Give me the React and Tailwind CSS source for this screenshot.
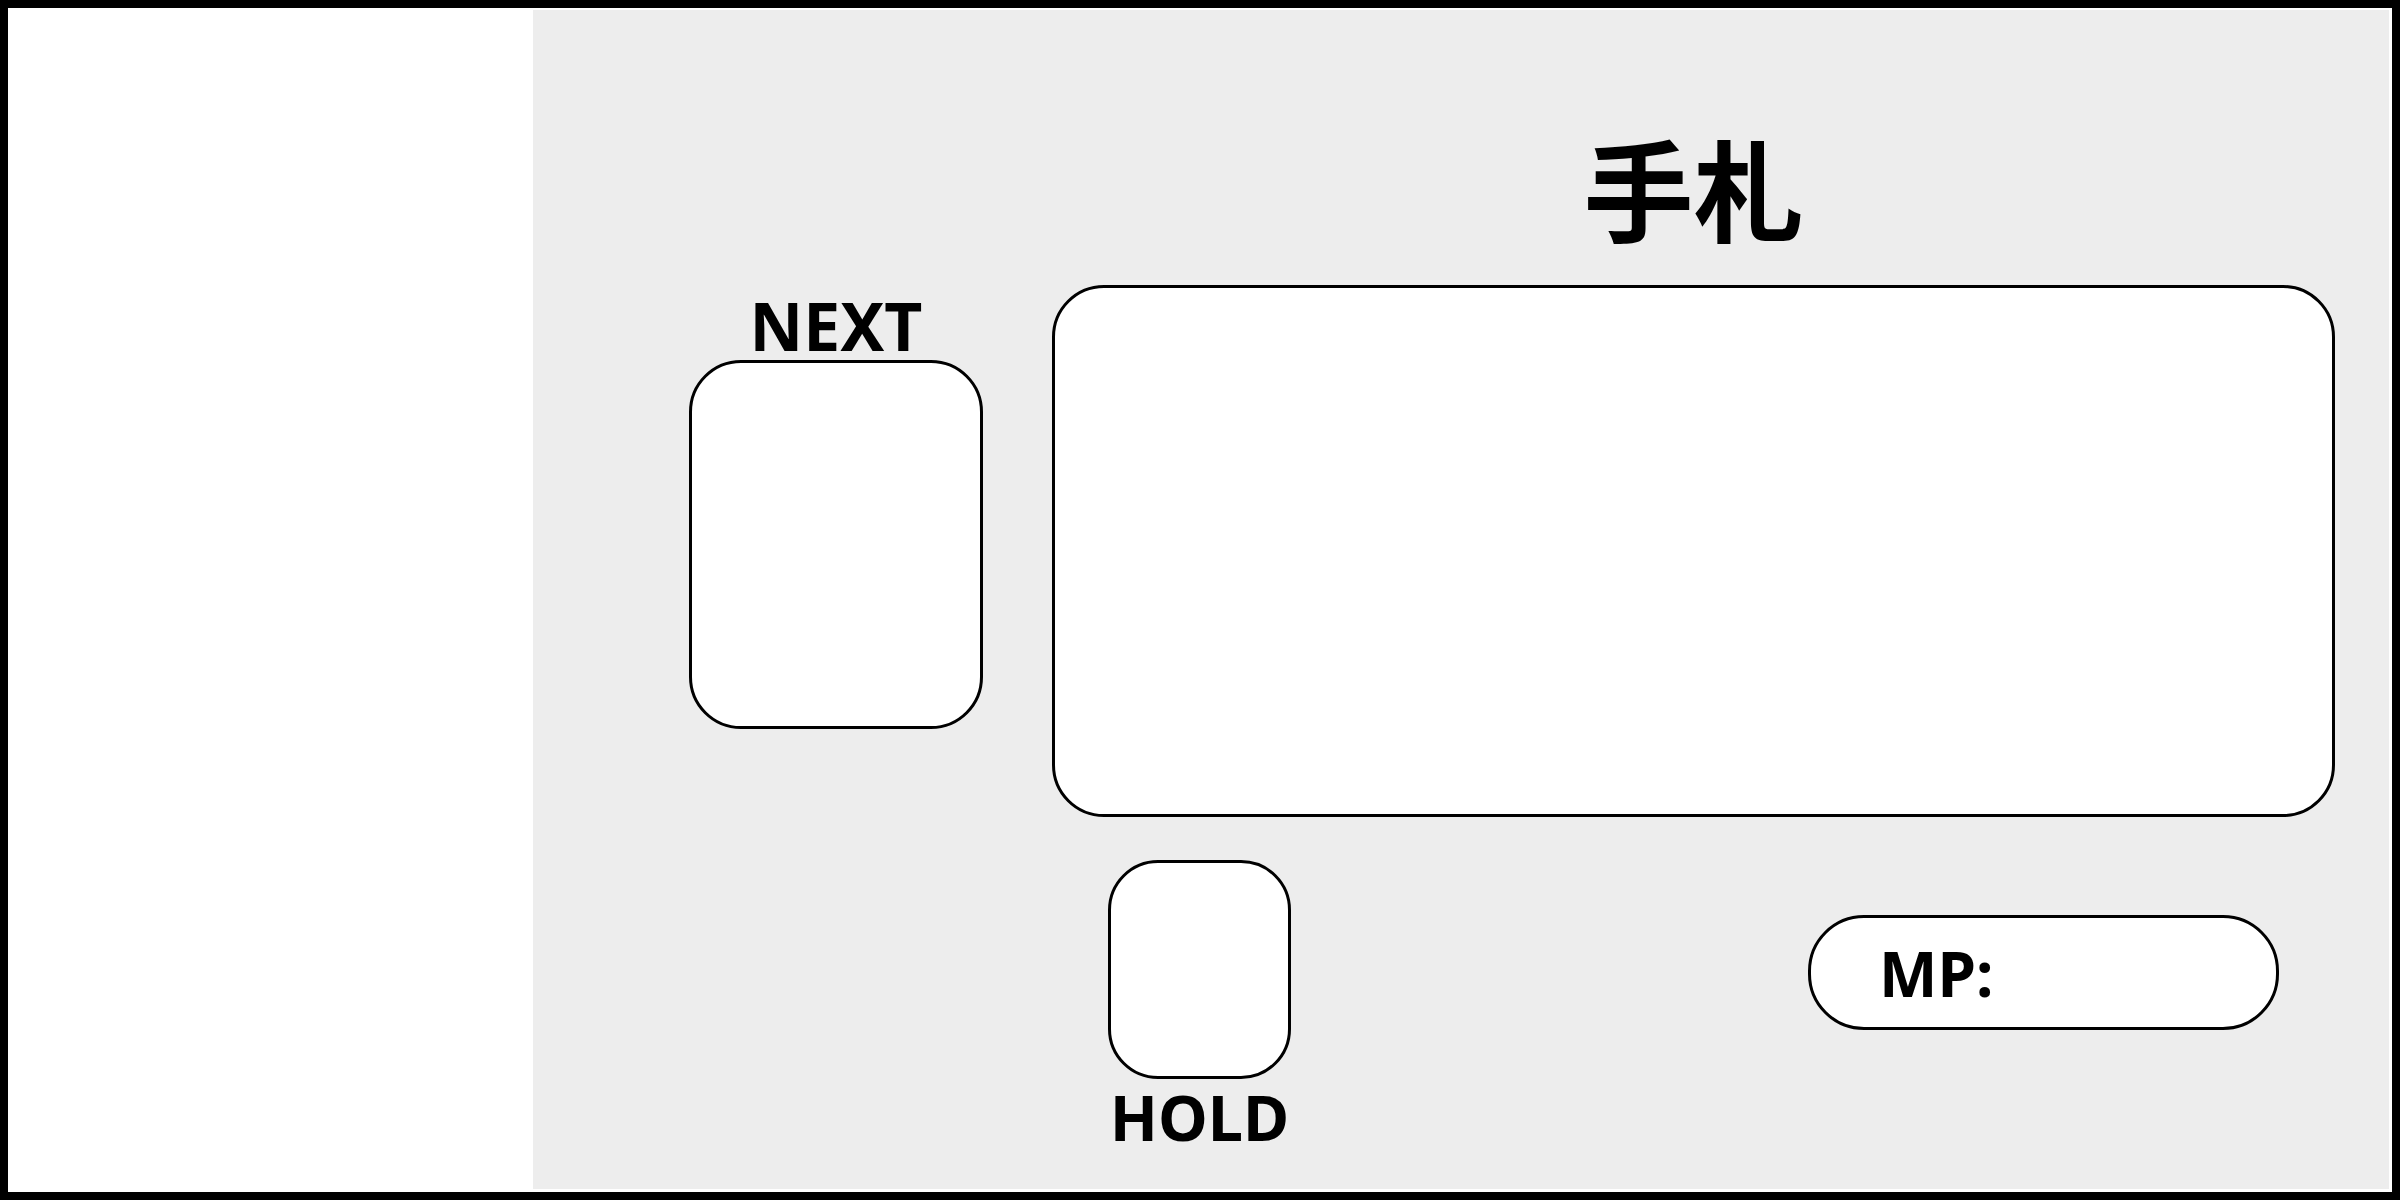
export default function App() {
  const label = { fontFamily: '"Noto Sans", "Noto Sans CJK JP", sans-serif' };
  const title = { fontFamily: '"Noto Sans CJK JP", "Noto Sans", sans-serif' };

  return (
    <div className="h-screen w-full border-[8px] border-black bg-white pt-[2px] pr-[3px] pb-[3px] flex">
      <aside className="w-[525px] bg-white" />

      <main className="flex-1 bg-[#ededed] flex flex-col">
        <div className="flex items-start pl-[156px]">
          <div className="w-[294px] mt-[282px] flex flex-col">
            <div className="text-[66px] leading-none font-bold text-black text-center" style={label}>
              NEXT
            </div>
            <div className="mt-[2px] h-[369px] rounded-[52px] border-[3px] border-black bg-white" />
          </div>

          <div className="ml-[69px] w-[1283px] flex flex-col">
            <h1 className="mt-[121px] text-[110px] leading-none font-bold text-black text-center" style={title}>
              手札
            </h1>
            <div className="mt-[44px] h-[532px] rounded-[52px] border-[3px] border-black bg-white" />
          </div>
        </div>

        <div className="flex items-start pl-[575px]">
          <div className="w-[183px] mt-[43px] flex flex-col">
            <div className="h-[219px] rounded-[50px] border-[3px] border-black bg-white" />
            <div className="mt-[6px] text-[63px] leading-none font-bold text-black text-center" style={label}>
              HOLD
            </div>
          </div>

          <div className="ml-[517px] mt-[98px] w-[471px] h-[115px] rounded-[56px] border-[3px] border-black bg-white flex items-center pl-[68px]">
            <span className="text-[62px] leading-none font-bold text-black" style={label}>
              MP:
            </span>
          </div>
        </div>
      </main>
    </div>
  );
}
